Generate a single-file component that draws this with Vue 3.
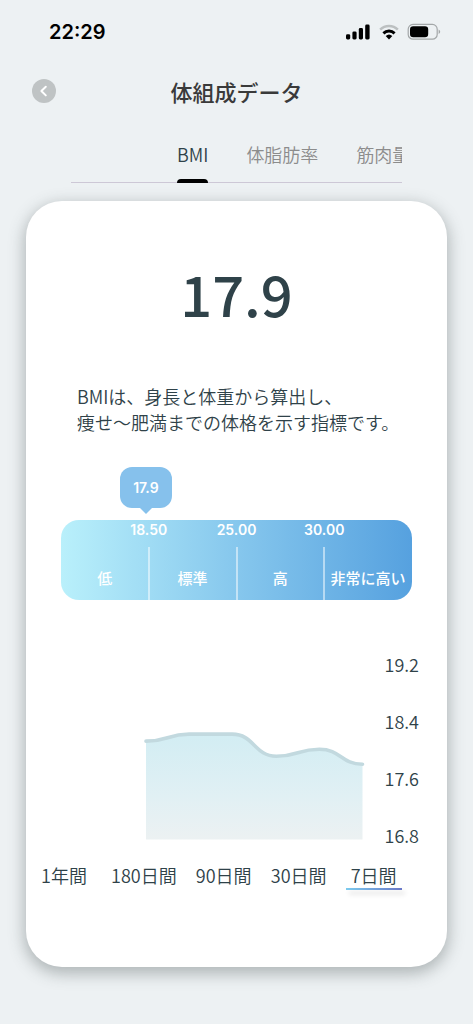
<script setup>
import { ref } from 'vue'

const tabs = ['BMI', '体脂肪率', '筋肉量']
const activeTab = ref('BMI')

const bmi = 17.9
const zones = [
  { label: '低', limit: '18.50' },
  { label: '標準', limit: '25.00' },
  { label: '高', limit: '30.00' },
  { label: '非常に高い', limit: '' },
]
const markerLeft = (bmi / 18.5) * 25 + '%'

const axis = ['19.2', '18.4', '17.6', '16.8']
const periods = ['1年間', '180日間', '90日間', '30日間', '7日間']
const activePeriod = ref('7日間')

const points = [
  [2, 79],
  [45, 72],
  [88, 72],
  [132, 94],
  [175, 87],
  [218, 102],
]
const curve = points.reduce((d, [x, y], i) => {
  if (i === 0) return `M${x} ${y}`
  const [px, py] = points[i - 1]
  const mid = (px + x) / 2
  return `${d} C${mid} ${py} ${mid} ${y} ${x} ${y}`
}, '')
const area = `${curve} V177 H2 Z`
</script>

<template>
  <div class="screen">
    <div class="status">
      <span class="time">22:29</span>
      <div class="indicators">
        <svg width="26" height="18" viewBox="0 0 26 18" aria-hidden="true">
          <rect x="1" y="11.2" width="4.2" height="5.2" rx="1.4" />
          <rect x="7.4" y="8.4" width="4.2" height="8" rx="1.4" />
          <rect x="13.8" y="5" width="4.2" height="11.4" rx="1.4" />
          <rect x="20.2" y="1.6" width="4.4" height="14.8" rx="1.4" />
        </svg>
        <svg width="20" height="18" viewBox="0 0 20 18" aria-hidden="true">
          <path d="M0.3 5.8 A13.6 13.6 0 0 1 19.7 5.8 L18 7.6 A11.2 11.2 0 0 0 2 7.6 Z" fill="#bcc0c1" />
          <path d="M3.4 9.2 A9.3 9.3 0 0 1 16.6 9.2 L14.6 11.4 A6.7 6.7 0 0 0 5.4 11.4 Z" />
          <path d="M6.7 13 A4.8 4.8 0 0 1 13.3 13 L10 16.4 Z" />
        </svg>
        <svg width="34" height="18" viewBox="0 0 34 18" aria-hidden="true">
          <rect x="1.2" y="1.4" width="29" height="14.8" rx="4.8" fill="none" stroke="#a3a7a8" stroke-width="1.2" />
          <rect x="3" y="3.3" width="18.2" height="11" rx="3.2" />
          <path d="M31.6 6.6 Q33.2 7.4 33.2 8.8 Q33.2 10.2 31.6 11 Z" fill="#a3a7a8" />
        </svg>
      </div>
    </div>

    <header class="header">
      <button class="back" type="button" aria-label="戻る">
        <svg width="24" height="24" viewBox="0 0 24 24" aria-hidden="true">
          <path d="M13.8 7.8 L9.4 12 L13.8 16.4" fill="none" stroke="#fff" stroke-width="2" stroke-linecap="round" stroke-linejoin="round" />
        </svg>
      </button>
      <h1>体組成データ</h1>
    </header>

    <nav class="tabs">
      <button
        v-for="t in tabs"
        :key="t"
        type="button"
        :class="['tab', { active: t === activeTab }]"
        @click="activeTab = t"
      >{{ t }}</button>
    </nav>

    <main class="card">
      <p class="value">{{ bmi }}</p>
      <p class="description">BMIは、身長と体重から算出し、<br />痩せ〜肥満までの体格を示す指標です。</p>

      <section class="gauge">
        <div class="marker" :style="{ left: markerLeft }">{{ bmi }}</div>
        <div class="scale">
          <div v-for="z in zones" :key="z.label" class="zone">
            <span class="limit">{{ z.limit }}</span>
            <span class="zone-label">{{ z.label }}</span>
          </div>
        </div>
      </section>

      <section class="chart">
        <svg class="plot" viewBox="0 0 220 180" aria-hidden="true">
          <defs>
            <linearGradient id="fill" x1="0" y1="0" x2="0" y2="1">
              <stop offset="0" stop-color="#d2edf3" />
              <stop offset="0.6" stop-color="#e1f0f4" />
              <stop offset="1" stop-color="#ecf1f2" />
            </linearGradient>
          </defs>
          <path :d="area" fill="url(#fill)" />
          <path :d="curve" fill="none" stroke="#c2d9df" stroke-width="3.6" stroke-linecap="round" />
        </svg>
        <div class="axis">
          <span v-for="a in axis" :key="a">{{ a }}</span>
        </div>
      </section>

      <div class="periods">
        <button
          v-for="p in periods"
          :key="p"
          type="button"
          :class="['period', { active: p === activePeriod }]"
          @click="activePeriod = p"
        >{{ p }}</button>
      </div>
    </main>
  </div>
</template>

<style>
body {
  margin: 0;
  background: #edf1f3;
}
</style>

<style scoped>
.screen {
  box-sizing: border-box;
  min-height: 100vh;
  padding-bottom: 57px;
  overflow: hidden;
  display: flex;
  flex-direction: column;
  background: #edf1f3;
  color: #2f4249;
  font-family: "Noto Sans CJK JP", sans-serif;
  font-size: 18px;
  font-weight: 350;
}
button {
  padding: 0;
  border: 0;
  background: none;
  color: inherit;
  font: inherit;
  white-space: nowrap;
  cursor: pointer;
}
h1,
p {
  margin: 0;
}
.status {
  height: 64px;
  padding: 0 32px 0 49px;
  display: flex;
  align-items: center;
  justify-content: space-between;
}
.time {
  color: #000;
  font-family: Inter, sans-serif;
  font-size: 20px;
  font-weight: 600;
}
.indicators {
  display: flex;
  gap: 8px;
}
.header {
  height: 54px;
  padding: 0 32px;
  display: grid;
  grid-template-columns: 24px 1fr 24px;
  align-items: center;
}
.back {
  width: 24px;
  height: 24px;
  border-radius: 50%;
  background: #bfc3c4;
}
.back svg {
  display: block;
}
h1 {
  color: #3a3a3a;
  font-size: 22px;
  font-weight: 500;
  line-height: 32px;
  text-align: center;
}
.tabs {
  height: 65px;
  margin: 0 71px;
  padding-left: 106px;
  display: flex;
  gap: 38px;
  overflow: hidden;
  background: linear-gradient(#cdc8d6, #cdc8d6) left bottom / 100% 1px no-repeat;
  box-sizing: border-box;
}
.tab {
  flex: none;
  padding-top: 7px;
  color: #8c8c8c;
}
.tab.active {
  color: #2f4249;
  position: relative;
}
.tab.active::after {
  content: "";
  position: absolute;
  left: 0;
  right: 0;
  bottom: 0;
  height: 4px;
  border-radius: 4px 4px 0 0;
  background: #000;
}
.card {
  flex: 1;
  margin: 18px 26px 0;
  padding-top: 52px;
  border-radius: 36px;
  background: #fff;
  box-shadow: 0 5px 15px 2px rgba(60, 70, 70, 0.34);
}
.value {
  font-size: 56px;
  font-weight: 500;
  line-height: 80px;
  text-align: center;
}
.description {
  margin: 50px 0 0 51px;
  line-height: 26px;
  white-space: nowrap;
}
.gauge {
  position: relative;
  margin: 32px 35px 0;
  padding-top: 53px;
  color: #fff;
  font-weight: 500;
}
.marker {
  position: absolute;
  top: 0;
  width: 52px;
  line-height: 41px;
  border-radius: 12px;
  transform: translateX(-50%);
  background: #86c1ec;
  font-family: Inter, sans-serif;
  font-size: 14px;
  font-weight: 600;
  text-align: center;
}
.marker::after {
  content: "";
  position: absolute;
  top: 100%;
  left: 50%;
  margin: -1px 0 0 -7px;
  border: 7px solid transparent;
  border-top-color: #86c1ec;
  border-bottom: 0;
}
.scale {
  height: 80px;
  display: grid;
  grid-template-columns: repeat(4, 1fr);
  border-radius: 18px;
  background: linear-gradient(90deg, #b9f0fb, #86c7ed 50%, #56a1df);
}
.zone {
  position: relative;
  display: flex;
  align-items: flex-end;
  justify-content: center;
  padding-bottom: 11px;
}
.zone:not(:last-child)::after {
  content: "";
  position: absolute;
  top: 27px;
  right: -1px;
  bottom: 0;
  width: 2px;
  background: rgba(255, 255, 255, 0.5);
}
.limit {
  position: absolute;
  top: 0;
  left: 100%;
  transform: translateX(-50%);
  font-family: Inter, sans-serif;
  font-size: 14px;
  font-weight: 600;
  line-height: 20px;
}
.zone-label {
  font-size: 15px;
  line-height: 22px;
  white-space: nowrap;
}
.chart {
  margin: 51px 28px 0 118px;
  display: flex;
  align-items: flex-start;
  gap: 20px;
}
.plot {
  flex: 1;
  min-width: 0;
  margin-top: 11px;
}
.axis {
  display: grid;
  gap: 31px;
  line-height: 26px;
}
.periods {
  margin: 14px 0 60px 10px;
  display: flex;
  align-items: flex-start;
  gap: 19px;
}
.period {
  min-width: 56px;
  line-height: 26px;
}
.period.active {
  position: relative;
}
.period.active::after {
  content: "";
  position: absolute;
  left: 0;
  right: 0;
  top: 26px;
  height: 2px;
  background: linear-gradient(90deg, #7ccbee, #6a78c8);
  box-shadow: 3px 4px 5px rgba(0, 0, 0, 0.16);
}
</style>
